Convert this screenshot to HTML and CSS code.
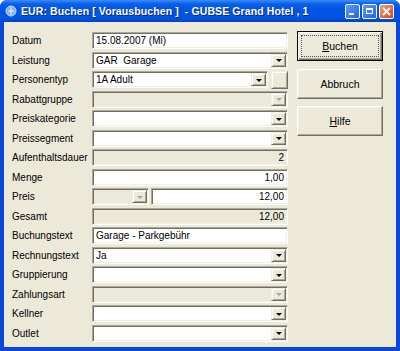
FILE: index.html
```html
<!DOCTYPE html>
<html>
<head>
<meta charset="utf-8">
<link rel="stylesheet" href="styles.css">
</head>
<body>
<div class="window">
  <div class="titlebar">
    <svg class="appicon" width="12" height="12" viewBox="0 0 12 12"><circle cx="6" cy="6" r="5" fill="#7fb0f0" stroke="#c8ddf8" stroke-width="1"/><path d="M3 6h6M6 2v8" stroke="#e8f0fc" stroke-width="1"/></svg>
    <span class="title">EUR: Buchen [ Vorausbuchen ]&nbsp; - GUBSE Grand Hotel , 1</span>
    <div class="tbtns">
      <span class="tbtn min"><span class="minbar"></span></span>
      <span class="tbtn max"><span class="maxbox"></span></span>
      <span class="tbtn close"><svg width="9" height="9" viewBox="0 0 9 9"><path d="M1 1L8 8M8 1L1 8" stroke="#fff" stroke-width="1.8"/></svg></span>
    </div>
  </div>
  <div class="client">
    <div class="form">
      <label>Datum</label>
      <div class="field"><span class="val">15.08.2007 (Mi)</span></div>

      <label>Leistung</label>
      <div class="field combo"><span class="val">GAR&nbsp; Garage</span><span class="drop"></span></div>

      <label>Personentyp</label>
      <div class="pair">
        <div class="field combo w176"><span class="val">1A Adult</span><span class="drop"></span></div>
        <span class="minibtn"></span>
      </div>

      <label>Rabattgruppe</label>
      <div class="field combo disabled"><span class="val"></span><span class="drop"></span></div>

      <label>Preiskategorie</label>
      <div class="field combo"><span class="val"></span><span class="drop"></span></div>

      <label>Preissegment</label>
      <div class="field combo"><span class="val"></span><span class="drop"></span></div>

      <label>Aufenthaltsdauer</label>
      <div class="field disabled num"><span class="val">2</span></div>

      <label>Menge</label>
      <div class="field num"><span class="val">1,00</span></div>

      <label>Preis</label>
      <div class="pair gap2">
        <div class="field combo disabled w57"><span class="val"></span><span class="drop"></span></div>
        <div class="field num grow"><span class="val">12,00</span></div>
      </div>

      <label>Gesamt</label>
      <div class="field disabled num"><span class="val">12,00</span></div>

      <label>Buchungstext</label>
      <div class="field"><span class="val">Garage - Parkgebühr</span></div>

      <label>Rechnungstext</label>
      <div class="field combo"><span class="val">Ja</span><span class="drop"></span></div>

      <label>Gruppierung</label>
      <div class="field combo"><span class="val"></span><span class="drop"></span></div>

      <label>Zahlungsart</label>
      <div class="field combo disabled"><span class="val"></span><span class="drop"></span></div>

      <label>Kellner</label>
      <div class="field combo"><span class="val"></span><span class="drop"></span></div>

      <label>Outlet</label>
      <div class="field combo"><span class="val"></span><span class="drop"></span></div>
    </div>
    <div class="buttons">
      <div class="btn default"><span class="focus"><u>B</u>uchen</span></div>
      <div class="btn">Abbruch</div>
      <div class="btn"><u>H</u>ilfe</div>
    </div>
  </div>
</div>
</body>
</html>
```
FILE: styles.css
```css
html, body {
  margin: 0;
  padding: 0;
  background: #ffffff;
}
body {
  font-family: "Liberation Sans", Arial, sans-serif;
  font-size: 10px;
  color: #000;
}
.window {
  width: 400px;
  height: 351px;
  box-sizing: border-box;
  display: flex;
  flex-direction: column;
  background: #0a48d8;
  border-radius: 7px 7px 0 0;
  overflow: hidden;
}
.titlebar {
  height: 22px;
  flex: none;
  display: flex;
  align-items: center;
  padding: 0 6px 0 5px;
  background: linear-gradient(#3a8cf8 0%, #0a5fe8 18%, #0054e3 45%, #0055e5 80%, #0043c0 100%);
  color: #fff;
}
.appicon {
  flex: none;
  margin-right: 4px;
}
.title {
  font-weight: bold;
  font-size: 10.5px;
  white-space: nowrap;
  text-shadow: 1px 1px 0 #0a2a80;
  letter-spacing: 0.1px;
}
.tbtns {
  margin-left: auto;
  display: flex;
  gap: 2px;
}
.tbtn {
  width: 15px;
  height: 15px;
  box-sizing: border-box;
  border: 1px solid #fff;
  border-radius: 2px;
  background: linear-gradient(135deg, #5c9cff, #2363e0);
  display: flex;
  align-items: center;
  justify-content: center;
  position: relative;
}
.tbtn.close {
  background: linear-gradient(135deg, #f0a080, #d84020);
}
.minbar {
  position: absolute;
  left: 3px;
  bottom: 3px;
  width: 5px;
  height: 2px;
  background: #fff;
}
.maxbox {
  width: 7px;
  height: 6px;
  box-sizing: border-box;
  border: 1px solid #fff;
  border-top-width: 2px;
}
.client {
  flex: 1;
  margin: 0 4px 4px 4px;
  background: #ece9d8;
  display: flex;
  align-items: flex-start;
  padding: 10px 0 0 8px;
}
.form {
  display: grid;
  grid-template-columns: 80px 196px;
  grid-auto-rows: 19.53px;
  align-items: start;
}
.form label {
  line-height: 17px;
  height: 17px;
  white-space: nowrap;
}
.field {
  height: 17px;
  box-sizing: border-box;
  border: 1px solid;
  border-color: #aca899 #ffffff #ffffff #aca899;
  box-shadow: inset 1px 1px #716f64, inset -1px -1px #f1efe2;
  background: #fff;
  display: flex;
  align-items: center;
  padding: 0 2px 0 3px;
  overflow: hidden;
}
.field .val {
  flex: 1;
  white-space: nowrap;
  line-height: 15px;
}
.field.num .val {
  text-align: right;
}
.field.num {
  padding-right: 3px;
}
.field.disabled {
  background: #ece9d8;
}
.field.combo {
  padding-right: 1px;
}
.drop {
  flex: none;
  width: 15px;
  height: 13px;
  box-sizing: border-box;
  border: 1px solid;
  border-color: #f1efe2 #716f64 #716f64 #f1efe2;
  box-shadow: inset 1px 1px #fff, inset -1px -1px #aca899;
  background: #ece9d8;
  display: flex;
  align-items: center;
  justify-content: center;
}
.drop::after {
  content: "";
  width: 0;
  height: 0;
  border-left: 3px solid transparent;
  border-right: 3px solid transparent;
  border-top: 3px solid #000;
  margin-top: 1px;
}
.disabled .drop::after {
  border-top-color: #aca899;
}
.pair {
  display: flex;
  gap: 3px;
}
.pair.gap2 {
  gap: 2px;
}
.w176 {
  width: 176px;
}
.w57 {
  width: 57px;
}
.grow {
  flex: 1;
}
.minibtn {
  width: 17px;
  height: 18px;
  box-sizing: border-box;
  border: 1px solid;
  border-color: #f1efe2 #716f64 #716f64 #f1efe2;
  box-shadow: inset 1px 1px #fff, inset -1px -1px #aca899;
  background: #ece9d8;
}
.buttons {
  margin-left: 9px;
  margin-top: -1px;
  display: flex;
  flex-direction: column;
  gap: 7.5px;
}
.btn {
  width: 86px;
  height: 30px;
  box-sizing: border-box;
  border: 1px solid;
  border-color: #ffffff #716f64 #716f64 #ffffff;
  box-shadow: inset -1px -1px #aca899, inset 1px 1px #f1efe2;
  background: #ece9d8;
  display: flex;
  align-items: center;
  justify-content: center;
  font-size: 10.5px;
}
.btn u {
  text-decoration: underline;
  text-underline-offset: 1px;
}
.btn.default {
  border: 1px solid #000;
  box-shadow: inset 1px 1px #fff, inset -1px -1px #716f64, inset -2px -2px #aca899;
  padding: 3px;
}
.btn .focus {
  flex: 1;
  align-self: stretch;
  border: 1px dotted #555;
  display: flex;
  align-items: center;
  justify-content: center;
}
```
